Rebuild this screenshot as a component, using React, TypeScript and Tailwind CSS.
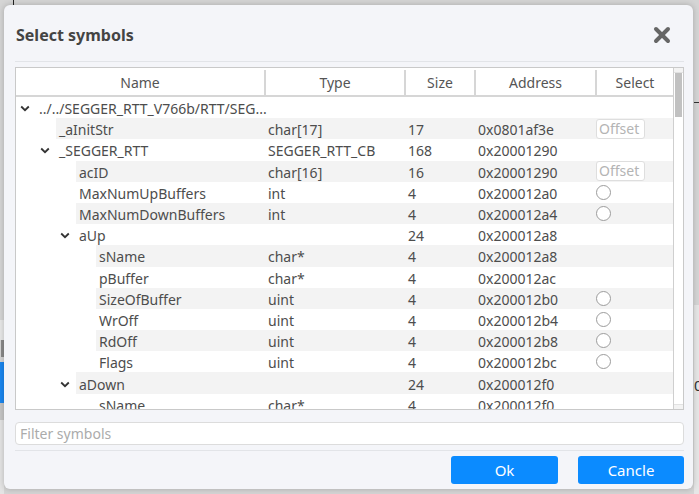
import { X } from 'lucide-react';

type SymbolRow = {
  level: number;
  name: string;
  expandable?: boolean;
  type?: string;
  size?: string;
  address?: string;
  select?: 'offset' | 'radio';
};

const rows: SymbolRow[] = [
  { level: 0, name: '../../SEGGER_RTT_V766b/RTT/SEG...', expandable: true },
  { level: 1, name: '_aInitStr', type: 'char[17]', size: '17', address: '0x0801af3e', select: 'offset' },
  { level: 1, name: '_SEGGER_RTT', expandable: true, type: 'SEGGER_RTT_CB', size: '168', address: '0x20001290' },
  { level: 2, name: 'acID', type: 'char[16]', size: '16', address: '0x20001290', select: 'offset' },
  { level: 2, name: 'MaxNumUpBuffers', type: 'int', size: '4', address: '0x200012a0', select: 'radio' },
  { level: 2, name: 'MaxNumDownBuffers', type: 'int', size: '4', address: '0x200012a4', select: 'radio' },
  { level: 2, name: 'aUp', expandable: true, type: '', size: '24', address: '0x200012a8' },
  { level: 3, name: 'sName', type: 'char*', size: '4', address: '0x200012a8' },
  { level: 3, name: 'pBuffer', type: 'char*', size: '4', address: '0x200012ac' },
  { level: 3, name: 'SizeOfBuffer', type: 'uint', size: '4', address: '0x200012b0', select: 'radio' },
  { level: 3, name: 'WrOff', type: 'uint', size: '4', address: '0x200012b4', select: 'radio' },
  { level: 3, name: 'RdOff', type: 'uint', size: '4', address: '0x200012b8', select: 'radio' },
  { level: 3, name: 'Flags', type: 'uint', size: '4', address: '0x200012bc', select: 'radio' },
  { level: 2, name: 'aDown', expandable: true, type: '', size: '24', address: '0x200012f0' },
  { level: 3, name: 'sName', type: 'char*', size: '4', address: '0x200012f0' },
];

const indentClass = ['w-[20px]', 'w-[40px]', 'w-[60px]', 'w-[80px]'];

function Chevron() {
  return (
    <svg width="10" height="7" viewBox="0 0 10 7" fill="none">
      <path d="M1.2 1.5 L5 5.2 L8.8 1.5" stroke="#333" strokeWidth="1.8" />
    </svg>
  );
}

function Row({ row, striped }: { row: SymbolRow; striped: boolean }) {
  return (
    <div className="flex h-[21.2px] shrink-0 items-stretch">
      <div className={`${indentClass[row.level]} flex shrink-0 items-center justify-end pr-[6px] pt-[2px]`}>
        {row.expandable ? <Chevron /> : null}
      </div>
      <div className={`flex min-w-0 flex-1 items-center pt-[3px] leading-[18px] ${striped ? 'bg-[#f3f3f3]' : ''}`}>
        <div className="min-w-0 flex-1 whitespace-nowrap pl-[3px]">{row.name}</div>
        <div className="w-[140px] shrink-0 pl-[4px]">{row.type}</div>
        <div className="w-[70px] shrink-0 pl-[4px]">{row.size}</div>
        <div className="w-[121px] shrink-0 pl-[4px]">{row.address}</div>
        <div className="-mt-[3px] flex w-[78px] shrink-0 items-center pl-[1px]">
          {row.select === 'offset' ? (
            <div className="flex h-[20px] w-[49px] items-center rounded-[3px] border border-[#dedede] bg-white pl-[2px] text-[#b4b4b4]">
              Offset
            </div>
          ) : null}
          {row.select === 'radio' ? (
            <div className="h-[15px] w-[15px] rounded-full border border-[#9c9c9c] bg-white" />
          ) : null}
        </div>
      </div>
    </div>
  );
}

export default function App() {
  return (
    <div className="relative h-[494px] w-[699px] overflow-hidden bg-[#d5d5d5] font-['Noto_Sans',sans-serif] text-[14px] text-[#4d4d4d]">
      {/* page behind the dialog */}
      <div className="absolute left-[13px] top-0 h-[6px] w-[1px] bg-[#222]" />
      <div className="absolute left-[694px] top-[102px] h-[1px] w-[5px] bg-[#333]" />
      <div className="absolute left-[694px] top-[305px] h-[189px] w-[5px] bg-[#e6e6e6]" />
      <div className="absolute left-[694px] top-[376px] text-[15px] leading-[18px] text-[#333]">0</div>
      <div className="absolute left-0 top-[320px] h-[20px] w-[4px] bg-[#e8e8e8]" />
      <div className="absolute left-[1px] top-[340px] h-[17px] w-[4px] bg-[#8a8a8a]" />
      <div className="absolute left-0 top-[362px] h-[41px] w-[4px] bg-[#1b87f0]" />
      <div className="absolute left-0 top-[403px] h-[17px] w-[4px] bg-[#c6c6c6]" />
      <div className="absolute left-0 top-[420px] h-[74px] w-[4px] bg-[#e4e4e4]" />

      <div className="absolute left-[4px] top-[5px] flex h-[484px] w-[689px] flex-col rounded-[6px] bg-[#f4f5f9] pl-[11px] pr-[9px] shadow-[0_0_6px_rgba(0,0,0,0.22)]">
        <div className="flex h-[56px] shrink-0 items-center justify-between pl-[1px] pr-[10px] pt-[4px]">
          <span className="text-[16px] font-bold text-[#444]">Select symbols</span>
          <X size={24} strokeWidth={4} className="text-[#666]" />
        </div>
        <div className="h-[1px] shrink-0 bg-[#e2e4e8]" />

        <div className="mt-[5px] flex h-[343px] shrink-0 overflow-hidden border border-[#c9c9c9] bg-white">
          <div className="flex min-w-0 flex-1 flex-col overflow-hidden">
            <div className="flex h-[29px] shrink-0 border-b-2 border-[#d6d6d6] pt-[2px] text-[#555]">
              <div className="flex flex-1 items-center justify-center">Name</div>
              <div className="flex w-[140px] items-center justify-center border-l-2 border-[#d6d6d6]">Type</div>
              <div className="flex w-[70px] items-center justify-center border-l-2 border-[#d6d6d6]">Size</div>
              <div className="flex w-[121px] items-center justify-center border-l-2 border-[#d6d6d6]">Address</div>
              <div className="flex w-[78px] items-center justify-center border-l-2 border-[#d6d6d6]">Select</div>
            </div>
            {rows.map((row, i) => (
              <Row key={i} row={row} striped={i % 2 === 1} />
            ))}
          </div>
          <div className="flex w-[10px] shrink-0 flex-col border-l border-[#cfcfcf] bg-white">
            <div className="h-[5px] border-b border-[#e2e2e2] bg-[#f3f3f3]" />
            <div className="mx-[1px] h-[44px] bg-[#c1c1c1]" />
            <div className="flex-1" />
            <div className="h-[5px] border-t border-[#e2e2e2] bg-[#f3f3f3]" />
          </div>
        </div>

        <div className="mt-[12px] flex h-[23px] shrink-0 items-center rounded-[4px] border border-[#dcdcdc] bg-white pl-[4px] text-[#ababab]">
          Filter symbols
        </div>
        <div className="mt-[5px] h-[1px] shrink-0 bg-[#e2e4e8]" />

        <div className="mt-[5px] flex shrink-0 justify-end gap-[20px]">
          <button type="button" className="h-[28px] w-[107px] rounded-[3px] bg-[#0b8bff] text-[15px] text-white">
            Ok
          </button>
          <button type="button" className="h-[28px] w-[106px] rounded-[3px] bg-[#0b8bff] text-[15px] text-white">
            Cancle
          </button>
        </div>
      </div>
    </div>
  );
}
